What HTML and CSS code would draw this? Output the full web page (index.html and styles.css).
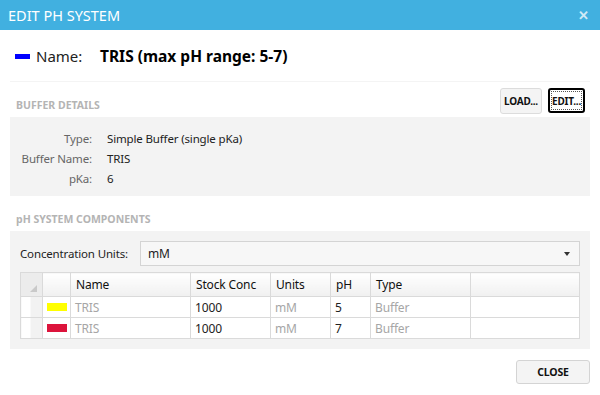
FILE: index.html
```html
<!DOCTYPE html>
<html>
<head>
  <meta charset="UTF-8">
  <title>Edit pH System</title>
  <link rel="stylesheet" href="styles.css">
</head>
<body>
  <div class="dialog">
    <div class="titlebar">
      <span class="title">EDIT PH SYSTEM</span>
      <span class="close-x">&#x2715;</span>
    </div>

    <div class="content">
      <!-- 名称 -->
      <div class="name-row">
        <span class="swatch swatch-blue"></span>
        <span class="name-label">Name:</span>
        <span class="name-value">TRIS (max pH range: 5-7)</span>
      </div>

      <!-- 缓冲详情 -->
      <div class="section-head">
        <span class="section-title">BUFFER DETAILS</span>
        <div class="head-buttons">
          <button class="btn-small">LOAD...</button>
          <button class="btn-small btn-focus">EDIT...</button>
        </div>
      </div>
      <div class="panel details">
        <span class="dt">Type:</span><span class="dd">Simple Buffer (single pKa)</span>
        <span class="dt">Buffer Name:</span><span class="dd">TRIS</span>
        <span class="dt">pKa:</span><span class="dd">6</span>
      </div>

      <!-- 组分 -->
      <div class="section-head">
        <span class="section-title">pH SYSTEM COMPONENTS</span>
      </div>
      <div class="panel components">
        <div class="units-row">
          <span class="units-label">Concentration Units:</span>
          <div class="select">
            <span>mM</span>
            <span class="arrow"></span>
          </div>
        </div>
        <table class="grid">
          <tr class="head">
            <th class="corner"><span class="corner-tri"></span></th>
            <th class="col-color"></th>
            <th class="col-name">Name</th>
            <th class="col-conc">Stock Conc</th>
            <th class="col-units">Units</th>
            <th class="col-ph">pH</th>
            <th class="col-type">Type</th>
            <th></th>
          </tr>
          <tr>
            <td class="rowhead"></td>
            <td class="swatch-cell"><span class="cell-swatch" style="background:#ffff00"></span></td>
            <td class="muted">TRIS</td>
            <td>1000</td>
            <td class="muted">mM</td>
            <td>5</td>
            <td class="muted">Buffer</td>
            <td></td>
          </tr>
          <tr>
            <td class="rowhead"></td>
            <td class="swatch-cell"><span class="cell-swatch" style="background:#dc143c"></span></td>
            <td class="muted">TRIS</td>
            <td>1000</td>
            <td class="muted">mM</td>
            <td>7</td>
            <td class="muted">Buffer</td>
            <td></td>
          </tr>
        </table>
      </div>

      <div class="footer">
        <button class="btn-close">CLOSE</button>
      </div>
    </div>
  </div>
</body>
</html>
```

FILE: styles.css
```css
body {
  margin: 0;
  font-family: "Segoe UI", "Noto Sans", "Open Sans", sans-serif;
  font-size: 11.5px;
  letter-spacing: -0.15px;
  color: #222;
  background: #fff;
}

.dialog {
  width: 600px;
  height: 395px;
  overflow: hidden;
}

/* 标题栏 */
.titlebar {
  height: 30px;
  background: #41b0e0;
  color: #fff;
  display: flex;
  align-items: center;
  justify-content: space-between;
  padding: 0 11px 0 8px;
}
.title {
  font-size: 14.5px;
  letter-spacing: 0;
}
.close-x {
  font-size: 13px;
  color: #cfe9f6;
  font-weight: bold;
}

.content {
  padding: 0 10px;
}

/* 名称行 */
.name-row {
  height: 50px;
  display: flex;
  align-items: center;
  padding-left: 5px;
  padding-top: 1px;
  border-bottom: 1px solid #f4f4f4;
}
.swatch-blue {
  width: 15px;
  height: 5px;
  background: #0000ff;
  margin-right: 6px;
  margin-top: 1px;
}
.name-label {
  font-size: 15px;
  letter-spacing: 0;
  width: 64px;
}
.name-value {
  font-size: 15.5px;
  letter-spacing: 0;
  font-weight: bold;
  color: #000;
}

/* 分区标题 */
.section-head {
  height: 35px;
  display: flex;
  align-items: center;
  justify-content: space-between;
}
.section-title {
  font-size: 10.5px;
  letter-spacing: 0;
  font-weight: bold;
  color: #b4b4b4;
  padding-left: 6px;
  padding-top: 10px;
}
.head-buttons {
  display: flex;
  gap: 6px;
  padding-right: 5px;
  padding-top: 3px;
}
.btn-small {
  font-family: inherit;
  font-size: 10px;
  letter-spacing: -0.2px;
  font-weight: bold;
  color: #111;
  height: 26px;
  padding: 0 3px;
  background: #f4f4f4;
  border: 1px solid #dcdcdc;
  border-radius: 3px;
}
.btn-focus {
  height: 25px;
  background: #fff;
  border: 2px solid #000;
  outline: 1px dotted #555;
  outline-offset: -4px;
  padding: 0 2px;
}

/* 面板 */
.panel {
  background: #f3f3f3;
}
.details {
  height: 79px;
  box-sizing: border-box;
  padding: 11px 0 0 0;
  display: grid;
  grid-template-columns: 82px 1fr;
  grid-auto-rows: 20px;
  column-gap: 15px;
  align-items: center;
}
.dt {
  text-align: right;
  color: #666;
}
.dd {
  color: #222;
}

.components {
  padding: 10px;
}
.units-row {
  display: flex;
  align-items: center;
}
.units-label {
  width: 120px;
}
.select {
  flex: 1;
  height: 25px;
  box-sizing: border-box;
  border: 1px solid #d4d4d4;
  background: #f7f7f7;
  display: flex;
  align-items: center;
  justify-content: space-between;
  padding: 0 9px 0 7px;
  font-size: 12px;
}
.arrow {
  width: 0;
  height: 0;
  border-left: 3px solid transparent;
  border-right: 3px solid transparent;
  border-top: 4px solid #333;
}

/* 表格 */
.grid {
  margin-top: 6px;
  width: 100%;
  border-collapse: collapse;
  border: 1px solid #d6d6d6;
  background: #fff;
  table-layout: fixed;
}
.grid th,
.grid td {
  box-sizing: border-box;
  border: 1px solid #dadada;
  text-align: left;
  padding: 0 0 0 4px;
  font-weight: normal;
  white-space: nowrap;
  overflow: hidden;
}
.grid th {
  height: 24px;
  background: linear-gradient(#fff, #f0f0f0);
  font-size: 12px;
  padding-left: 5px;
  color: #111;
}
.grid td {
  height: 21px;
  font-size: 12px;
}
.grid .corner {
  width: 22px;
  padding: 0;
  background: #ececec;
  position: relative;
}
.corner-tri {
  position: absolute;
  right: 5px;
  bottom: 4px;
  width: 0;
  height: 0;
  border-left: 7px solid transparent;
  border-bottom: 7px solid #c9c9c9;
}
.grid .rowhead {
  padding: 0;
  background: linear-gradient(to right, #fff 9px, #f2f2f2 9px);
}
.col-color { width: 28px; }
.col-name { width: 120px; }
.col-conc { width: 80px; }
.col-units { width: 60px; }
.col-ph { width: 40px; }
.col-type { width: 100px; }
.grid .swatch-cell {
  padding-left: 4px;
}
.cell-swatch {
  display: block;
  width: 20px;
  height: 8px;
}
.muted {
  color: #a6a6a6;
}

/* 底部 */
.footer {
  display: flex;
  justify-content: flex-end;
  padding-top: 11px;
}
.btn-close {
  font-family: inherit;
  font-size: 10.5px;
  letter-spacing: -0.2px;
  font-weight: bold;
  color: #111;
  width: 74px;
  height: 24px;
  background: #f4f4f4;
  border: 1px solid #d4d4d4;
  border-radius: 3px;
}
```
